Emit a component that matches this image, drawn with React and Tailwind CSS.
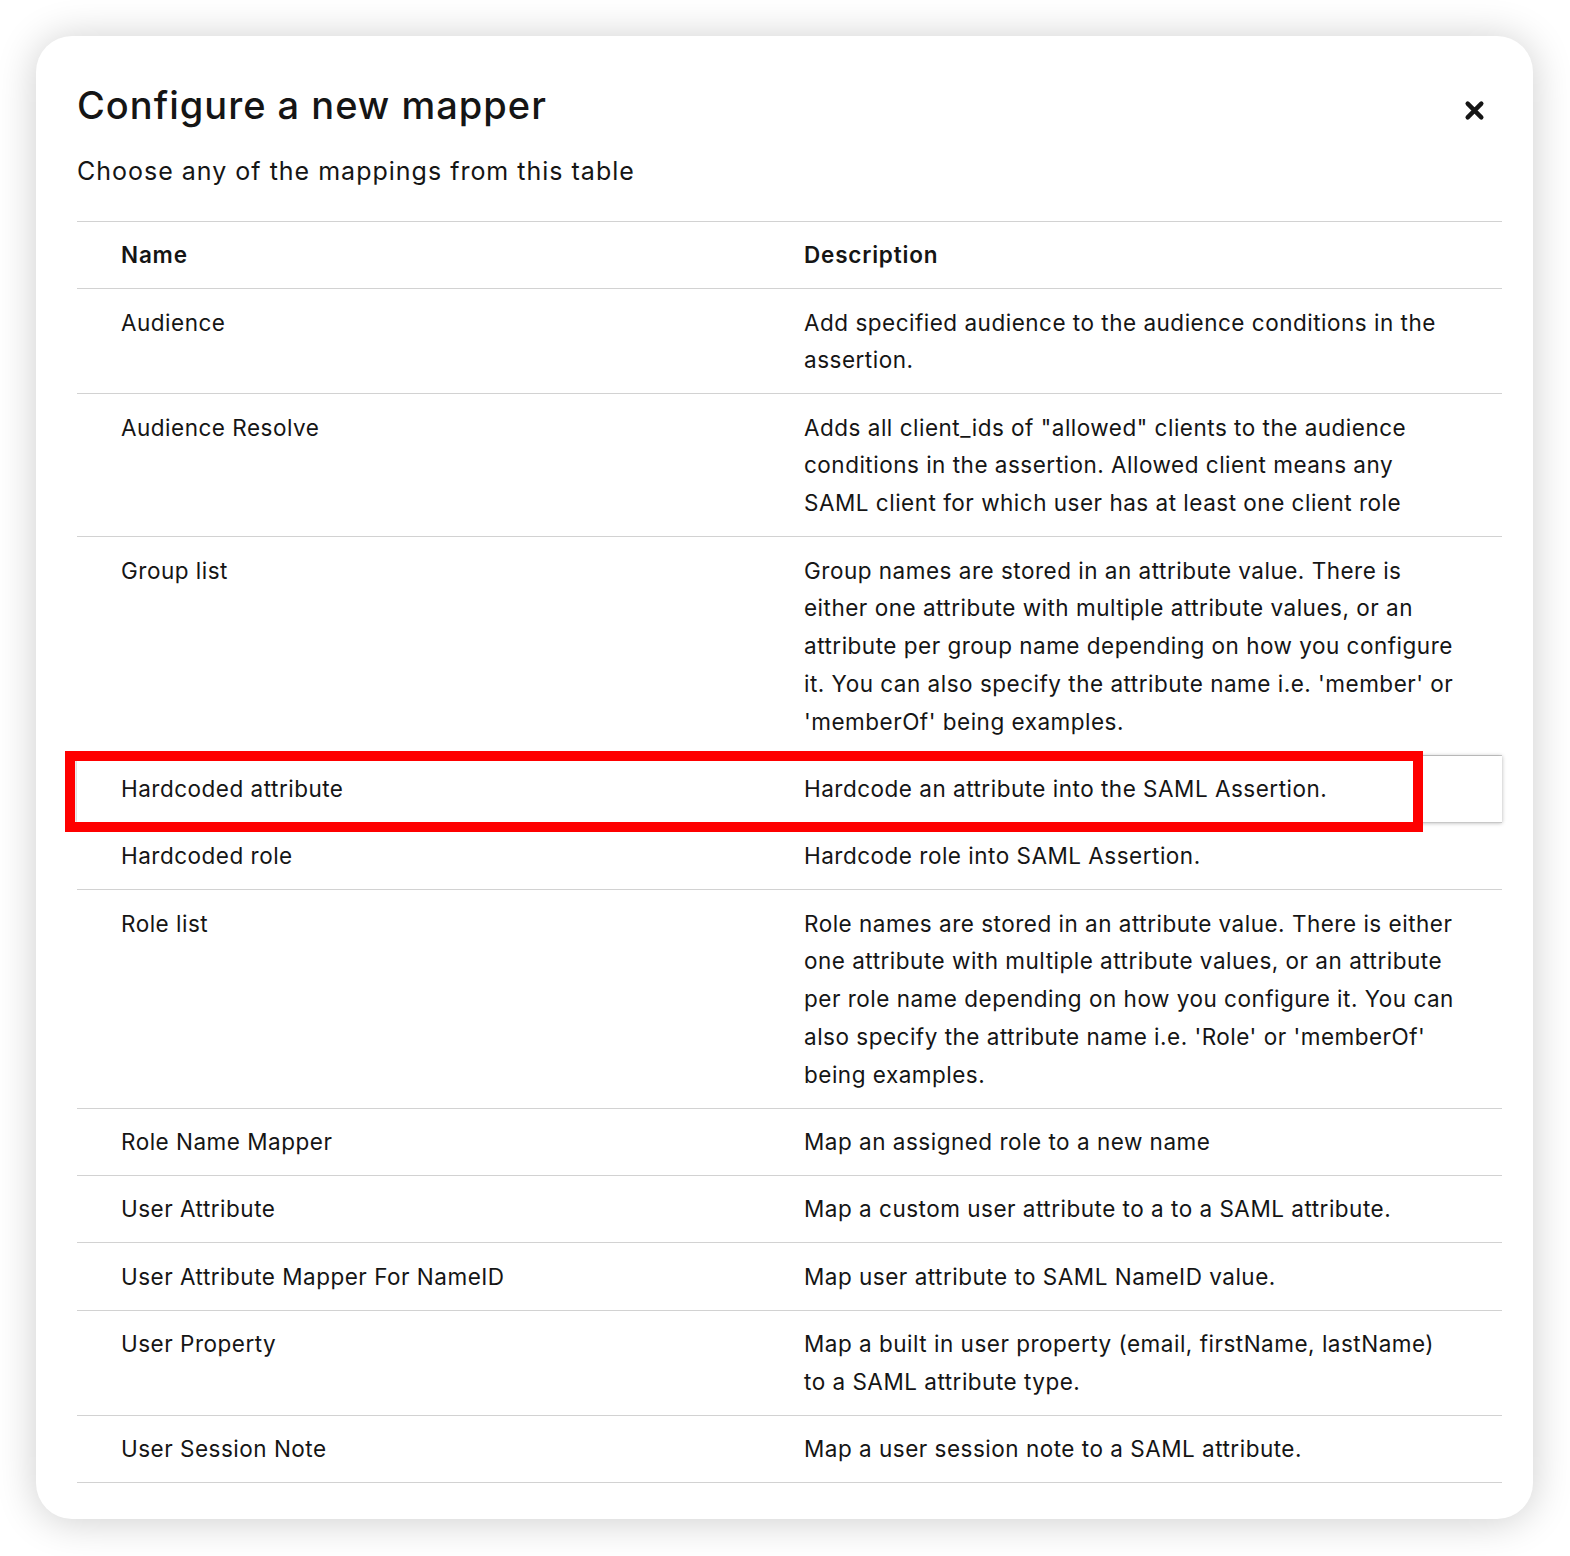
import React from "react";

const mappers = [
  {
    name: "Audience",
    description: "Add specified audience to the audience conditions in the assertion.",
  },
  {
    name: "Audience Resolve",
    description:
      'Adds all client_ids of "allowed" clients to the audience conditions in the assertion. Allowed client means any SAML client for which user has at least one client role',
  },
  {
    name: "Group list",
    description:
      "Group names are stored in an attribute value. There is either one attribute with multiple attribute values, or an attribute per group name depending on how you configure it. You can also specify the attribute name i.e. 'member' or 'memberOf' being examples.",
  },
  {
    name: "Hardcoded attribute",
    description: "Hardcode an attribute into the SAML Assertion.",
    hovered: true,
  },
  {
    name: "Hardcoded role",
    description: "Hardcode role into SAML Assertion.",
  },
  {
    name: "Role list",
    description:
      "Role names are stored in an attribute value. There is either one attribute with multiple attribute values, or an attribute per role name depending on how you configure it. You can also specify the attribute name i.e. 'Role' or 'memberOf' being examples.",
  },
  {
    name: "Role Name Mapper",
    description: "Map an assigned role to a new name",
  },
  {
    name: "User Attribute",
    description: "Map a custom user attribute to a to a SAML attribute.",
  },
  {
    name: "User Attribute Mapper For NameID",
    description: "Map user attribute to SAML NameID value.",
  },
  {
    name: "User Property",
    description: "Map a built in user property (email, firstName, lastName) to a SAML attribute type.",
  },
  {
    name: "User Session Note",
    description: "Map a user session note to a SAML attribute.",
  },
];

const App = () => {
  return (
    <div className="min-h-screen bg-white pt-[36px] pl-[36px] pr-[37px] pb-[37px] font-['Inter',sans-serif] text-[#151515]">
      <div className="rounded-[36px] bg-white pl-[41px] pr-[31px] pt-[45px] pb-[36px] shadow-[0_2px_40px_rgba(0,0,0,0.2)]">
        {/* Header */}
        <div className="flex items-start justify-between">
          <h1 className="text-[38px] leading-[48px] font-medium tracking-[1px]">
            Configure a new mapper
          </h1>
          <button className="w-[56px] h-[48px] flex items-center justify-center mt-[5px]">
            <svg width="21" height="21" viewBox="0 0 20 20">
              <path
                d="M3.5 3.5 L16.5 16.5 M16.5 3.5 L3.5 16.5"
                stroke="#151515"
                strokeWidth="4.2"
                strokeLinecap="round"
              />
            </svg>
          </button>
        </div>
        <p className="mt-[19px] text-[25px] leading-[36px] tracking-[1px]">
          Choose any of the mappings from this table
        </p>

        {/* Table */}
        <div className="mt-[32px] border-t border-[#d2d2d2] text-[22.5px] leading-[37.75px] tracking-[0.5px]">
          <div className="flex border-b border-[#d2d2d2] py-[14.3px] font-semibold tracking-[0.8px]">
            <div className="w-[727px] pl-[44px]">Name</div>
            <div className="flex-1 pr-[44px]">Description</div>
          </div>
          {mappers.map((m) =>
            m.hovered ? (
              <div
                key={m.name}
                className="relative z-10 flex bg-white py-[14.3px] border-b border-[#c8c8c8] shadow-[0_0_4px_rgba(0,0,0,0.3)]"
              >
                <div className="w-[727px] pl-[44px]">{m.name}</div>
                <div className="flex-1 pr-[44px]">{m.description}</div>
                <div className="absolute left-[-12px] top-[-5px] w-[1358px] h-[81px] border-[10px] border-[#fe0000]" />
              </div>
            ) : (
              <div key={m.name} className="flex border-b border-[#d2d2d2] py-[14.3px]">
                <div className="w-[727px] pl-[44px]">{m.name}</div>
                <div className="flex-1 pr-[44px]">{m.description}</div>
              </div>
            )
          )}
        </div>
      </div>
    </div>
  );
};

export default App;
